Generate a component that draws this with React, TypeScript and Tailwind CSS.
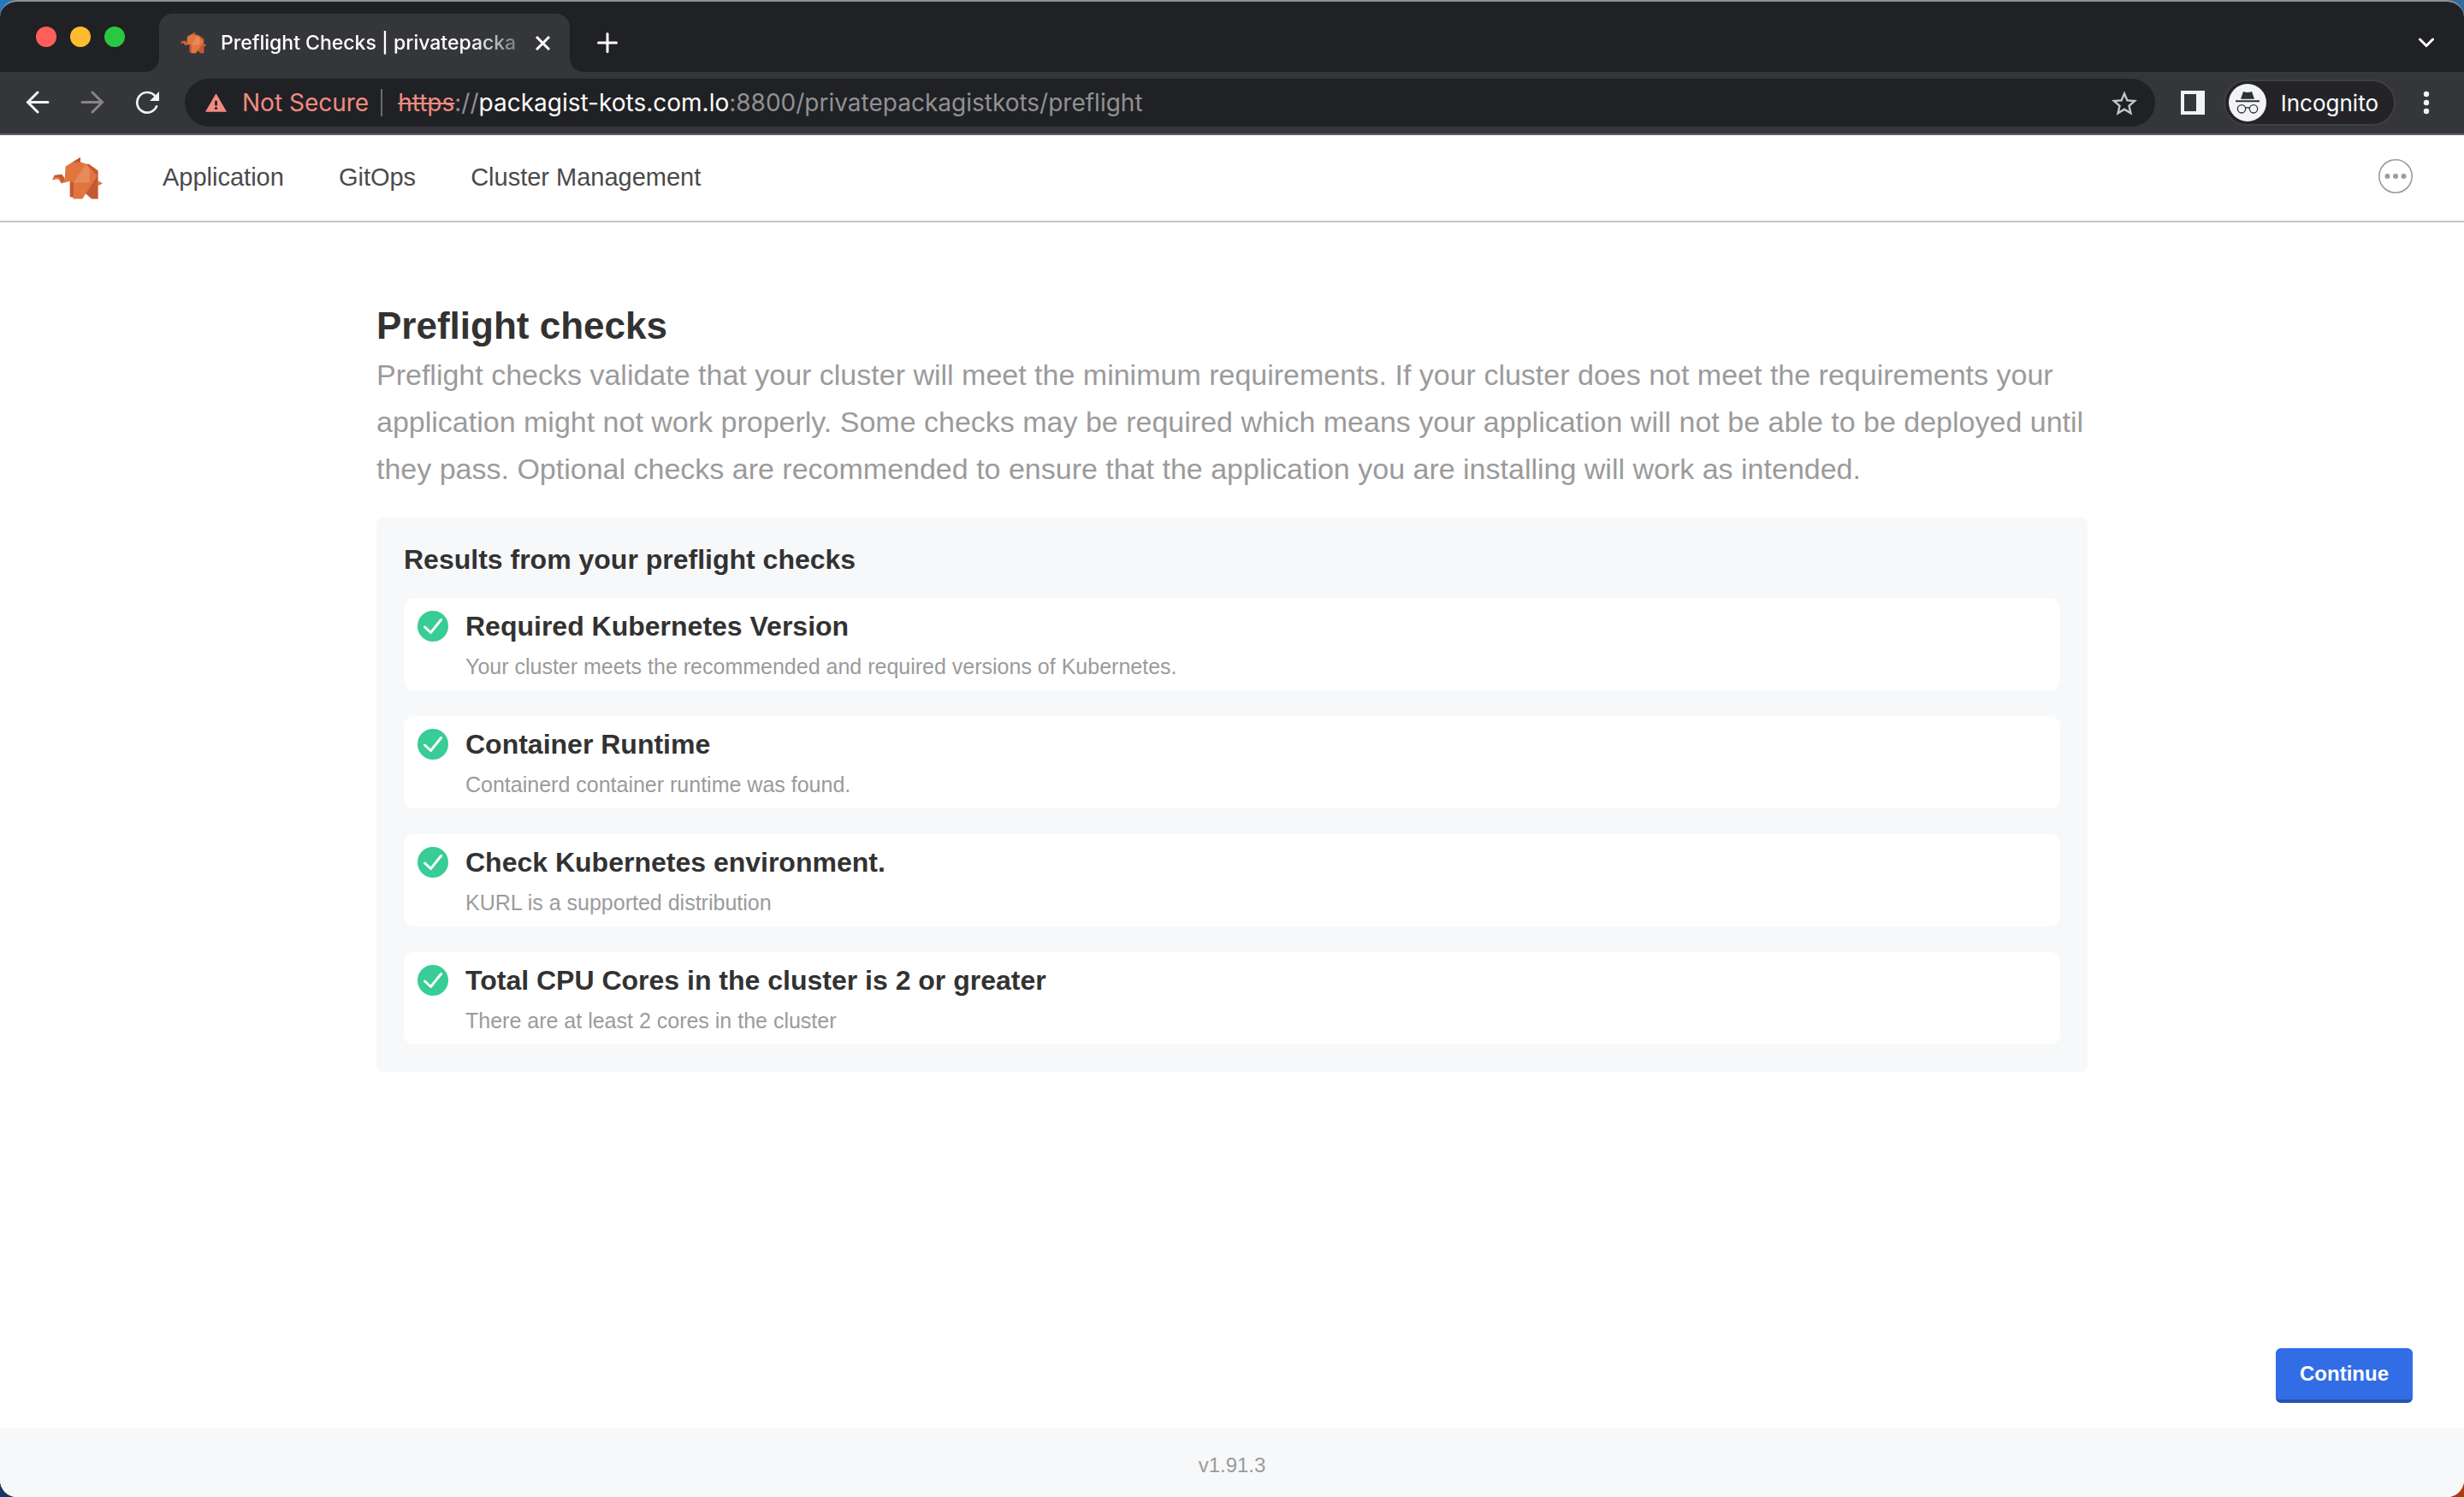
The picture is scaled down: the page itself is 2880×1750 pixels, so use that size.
import type { ReactNode } from "react";

const checks = [
  {
    title: "Required Kubernetes Version",
    detail: "Your cluster meets the recommended and required versions of Kubernetes.",
  },
  { title: "Container Runtime", detail: "Containerd container runtime was found." },
  { title: "Check Kubernetes environment.", detail: "KURL is a supported distribution" },
  {
    title: "Total CPU Cores in the cluster is 2 or greater",
    detail: "There are at least 2 cores in the cluster",
  },
];

function Elephant({ className }: { className: string }) {
  return (
    <svg viewBox="60 68 183 152" className={className} aria-hidden="true">
      <path d="M134 87 162 70V90L140 92Z" fill="#c0552f" />
      <path d="M64 149 71 133 97 130 107 143 104 154 95 162 88 147 80 140Z" fill="#c45a33" />
      <path d="M62 149 74 139 90 141 96 161 84 146Z" fill="#e1743f" />
      <path d="M125 154H140V216H137V211L125 209Z" fill="#c45a33" />
      <path d="M180 94 192 94 224 117V216H201L180 197Z" fill="#c45a33" />
      <path d="M223 152 240 161 223 171Z" fill="#e1743f" />
      <path
        d="M110 102 133 88 162 86 181 93 222 135 181 197 169 216H138V158L125 154 95 162 107 146Z"
        fill="#e1743f"
      />
      <path d="M182 95 194 109V159H137Z" fill="#e68b5b" />
    </svg>
  );
}

function CheckBadge() {
  return (
    <svg viewBox="0 0 36 36" className="size-9 shrink-0" aria-hidden="true">
      <circle cx="18" cy="18" r="18" fill="#38cc97" />
      <path
        d="M8.500 19 15.500 25.500 27.500 10.500"
        fill="none"
        stroke="#fff"
        strokeWidth="3"
        strokeLinecap="round"
        strokeLinejoin="round"
      />
    </svg>
  );
}

function IconButton({
  label,
  className = "",
  children,
}: {
  label: string;
  className?: string;
  children: ReactNode;
}) {
  return (
    <button type="button" aria-label={label} className={`flex shrink-0 items-center ${className}`}>
      {children}
    </button>
  );
}

function TabStrip() {
  return (
    <div className="flex h-[82px] items-end bg-[#202124]">
      <div className="flex h-full items-center gap-4 pr-6 pl-[42px]">
        <button type="button" aria-label="Close window" className="size-6 rounded-full bg-[#ff5f57]" />
        <button type="button" aria-label="Minimise window" className="size-6 rounded-full bg-[#febc2e]" />
        <button type="button" aria-label="Zoom window" className="size-6 rounded-full bg-[#28c840]" />
      </div>
      <div className="size-4 bg-[#35363a]">
        <div className="size-full rounded-br-full bg-[#202124]" />
      </div>
      <div className="flex h-[68px] w-[480px] items-center rounded-t-2xl bg-[#35363a] pr-[23px] pl-6">
        <Elephant className="h-[26px] w-8 shrink-0" />
        <span className="ml-4 flex-1 text-[23px] font-medium whitespace-nowrap text-white [mask-image:linear-gradient(to_right,black_84%,transparent_106%)]">
          Preflight Checks | privatepacka
        </span>
        <IconButton label="Close tab" className="ml-[18px]">
          <svg viewBox="0 0 17 17" className="size-[17px]" stroke="#fff" strokeWidth="3">
            <path d="M1 1 16 16M16 1 1 16" />
          </svg>
        </IconButton>
      </div>
      <div className="size-4 bg-[#35363a]">
        <div className="size-full rounded-bl-full bg-[#202124]" />
      </div>
      <IconButton label="New tab" className="ml-4 h-[68px]">
        <svg viewBox="0 0 24 24" className="size-6" stroke="#fff" strokeWidth="3" strokeLinecap="round">
          <path d="M12 1.500V22.500M1.500 12H22.500" />
        </svg>
      </IconButton>
      <IconButton label="Search tabs" className="mr-[35px] ml-auto h-[68px]">
        <svg
          viewBox="0 0 18 12"
          className="h-3 w-[18px]"
          fill="none"
          stroke="#fff"
          strokeWidth="3"
          strokeLinecap="round"
        >
          <path d="M1.500 2 9 9.500 16.500 2" />
        </svg>
      </IconButton>
    </div>
  );
}

function Toolbar() {
  return (
    <div className="flex h-[74px] items-center border-b-2 border-[#5f6064] bg-[#35363a] pl-[30px]">
      <IconButton label="Back">
        <svg viewBox="0 0 28 28" className="size-7" fill="none" stroke="#f1f3f4" strokeWidth="3" strokeLinecap="round">
          <path d="M26 13.500H3M14 2 2.500 13.500 14 25" />
        </svg>
      </IconButton>
      <IconButton label="Forward" className="ml-9">
        <svg viewBox="0 0 28 28" className="size-7" fill="none" stroke="#86868a" strokeWidth="3" strokeLinecap="round">
          <path d="M2 13.500H25M14 2 25.500 13.500 14 25" />
        </svg>
      </IconButton>
      <IconButton label="Reload" className="ml-9">
        <svg viewBox="474 318 90 84" className="h-7 w-[30px]">
          <path
            d="M549 373A35.500 35.500 0 1 1 542 335"
            fill="none"
            stroke="#f1f3f4"
            strokeWidth="8"
            strokeLinecap="round"
          />
          <path d="M558 321V354H525Z" fill="#f1f3f4" />
        </svg>
      </IconButton>
      <div className="ml-7 flex h-14 flex-1 items-center rounded-full bg-[#202124] pr-[21px] pl-6 text-[28px] whitespace-nowrap">
        <svg viewBox="1 2 22 19" className="h-[22px] w-[25px] shrink-0" fill="#f28b82" aria-hidden="true">
          <path d="M1 21h22L12 2 1 21zm12.200-2.500h-2.400v-2.400h2.400v2.400zm0-4h-2.400v-5h2.400v5z" />
        </svg>
        <span className="ml-[18px] text-[#f28b82]">Not Secure</span>
        <span className="mr-[18px] ml-3.5 h-8 w-0.5 bg-[#6b6c70]" />
        <a href="#preflight" className="flex-1 text-[#909194]">
          <span className="text-[#f28b82] line-through">https</span>://
          <span className="text-white">packagist-kots.com.lo</span>:8800/privatepackagistkots/preflight
        </a>
        <IconButton label="Bookmark this page">
          <svg viewBox="2 2 20 19" className="h-[29px] w-[30px]" fill="#c3c4c6">
            <path d="M22 9.240l-7.190-.62L12 2 9.190 8.630 2 9.240l5.460 4.730L5.820 21 12 17.270 18.180 21l-1.630-7.030L22 9.240zM12 15.400l-3.760 2.270 1-4.280-3.320-2.880 4.380-.38L12 6.100l1.710 4.040 4.380.38-3.320 2.880 1 4.280L12 15.400z" />
          </svg>
        </IconButton>
      </div>
      <IconButton label="Side panel" className="ml-[30px]">
        <svg viewBox="0 0 28 28" className="size-7">
          <path d="M0 0H28V28H0ZM4 4V24H18V4Z" fill="#f1f3f4" fillRule="evenodd" />
        </svg>
      </IconButton>
      <button
        type="button"
        className="ml-[22px] flex h-[54px] items-center gap-[17px] rounded-full border-2 border-[#3f4044] bg-[#242428] pr-[18px] pl-1 text-[26px] text-white"
      >
        <svg viewBox="678 293 132 132" className="size-11" aria-hidden="true">
          <circle cx="744" cy="359" r="66" fill="#f1f3f4" />
          <g fill="none" stroke="#303135" strokeWidth="4">
            <path d="M729 320Q744 326 759 320L768 346H720Z" fill="#303135" stroke="none" />
            <path d="M702 353.500H786" strokeWidth="6" />
            <circle cx="723" cy="381" r="14" />
            <circle cx="765" cy="381" r="14" />
            <path d="M737 378Q744 374 751 378" />
          </g>
        </svg>
        Incognito
      </button>
      <IconButton label="Browser menu" className="mr-10 ml-8">
        <svg viewBox="0 0 8 28" className="h-7 w-2" fill="#f1f3f4">
          <circle cx="4" cy="4" r="3.200" />
          <circle cx="4" cy="14" r="3.200" />
          <circle cx="4" cy="24" r="3.200" />
        </svg>
      </IconButton>
    </div>
  );
}

function SiteHeader() {
  return (
    <header className="flex h-[102px] items-center border-b-2 border-[#c4c8ca] bg-white px-[60px]">
      <a href="#home" aria-label="Home">
        <Elephant className="h-[51px] w-[61px]" />
      </a>
      <nav className="ml-[69px] flex gap-16 text-[29px] text-[#4a4a4a]">
        <a href="#application">Application</a>
        <a href="#gitops">GitOps</a>
        <a href="#cluster">Cluster Management</a>
      </nav>
      <IconButton label="More options" className="mb-1 ml-auto">
        <svg viewBox="0 0 40 40" className="size-10" fill="#9b9b9b">
          <circle cx="20" cy="20" r="19.200" fill="none" stroke="#9b9b9b" strokeWidth="1.600" />
          <circle cx="10.500" cy="20" r="3" />
          <circle cx="20" cy="20" r="3" />
          <circle cx="29.500" cy="20" r="3" />
        </svg>
      </IconButton>
    </header>
  );
}

export default function App() {
  return (
    <div className="min-h-screen bg-[conic-gradient(#2f6ca0_25%,#ab3c10_0_50%,#123a60_0_75%,#2279bd_0)]">
      <div className="flex min-h-screen flex-col overflow-hidden rounded-[20px] border-t-2 border-[#8e8f90] bg-white font-['Liberation_Sans',Arial,sans-serif]">
        <div className="font-['Inter',sans-serif]">
          <TabStrip />
          <Toolbar />
        </div>
        <SiteHeader />
        <main className="flex flex-1 flex-col">
          <div className="mx-auto w-full max-w-[2000px] pt-[91px]">
            <h1 className="text-[44px] leading-[60px] font-bold text-[#323232]">Preflight checks</h1>
            <p className="text-[34px] leading-[55px] text-[#9b9b9b]">
              Preflight checks validate that your cluster will meet the minimum requirements. If your cluster
              does not meet the requirements your application might not work properly. Some checks may be
              required which means your application will not be able to be deployed until they pass. Optional
              checks are recommended to ensure that the application you are installing will work as intended.
            </p>
            <section className="mt-[29px] rounded-lg bg-[#f7f8fa] px-8 pt-[29px] pb-8">
              <h2 className="text-[32px] leading-10 font-bold text-[#323232]">
                Results from your preflight checks
              </h2>
              <ul className="mt-[25px] flex flex-col gap-[30px]">
                {checks.map((check) => (
                  <li key={check.title} className="flex gap-5 rounded-xl bg-white px-4 py-[13px]">
                    <div className="flex h-10 items-center">
                      <CheckBadge />
                    </div>
                    <div>
                      <h3 className="text-[32px] leading-10 font-bold text-[#323232]">{check.title}</h3>
                      <p className="mt-3 text-[25px] leading-[30px] text-[#9b9b9b]">{check.detail}</p>
                    </div>
                  </li>
                ))}
              </ul>
            </section>
          </div>
          <div className="mt-auto flex justify-end px-[60px] py-[30px]">
            <button
              type="button"
              className="h-16 rounded-md border-b-4 border-[#2554b0] bg-[#326de6] px-7 text-2xl font-bold text-white"
            >
              Continue
            </button>
          </div>
        </main>
        <footer className="flex h-20 items-center justify-center bg-[#f7f8fa] pt-1.5 text-2xl text-[#9b9b9b]">
          v1.91.3
        </footer>
      </div>
    </div>
  );
}
